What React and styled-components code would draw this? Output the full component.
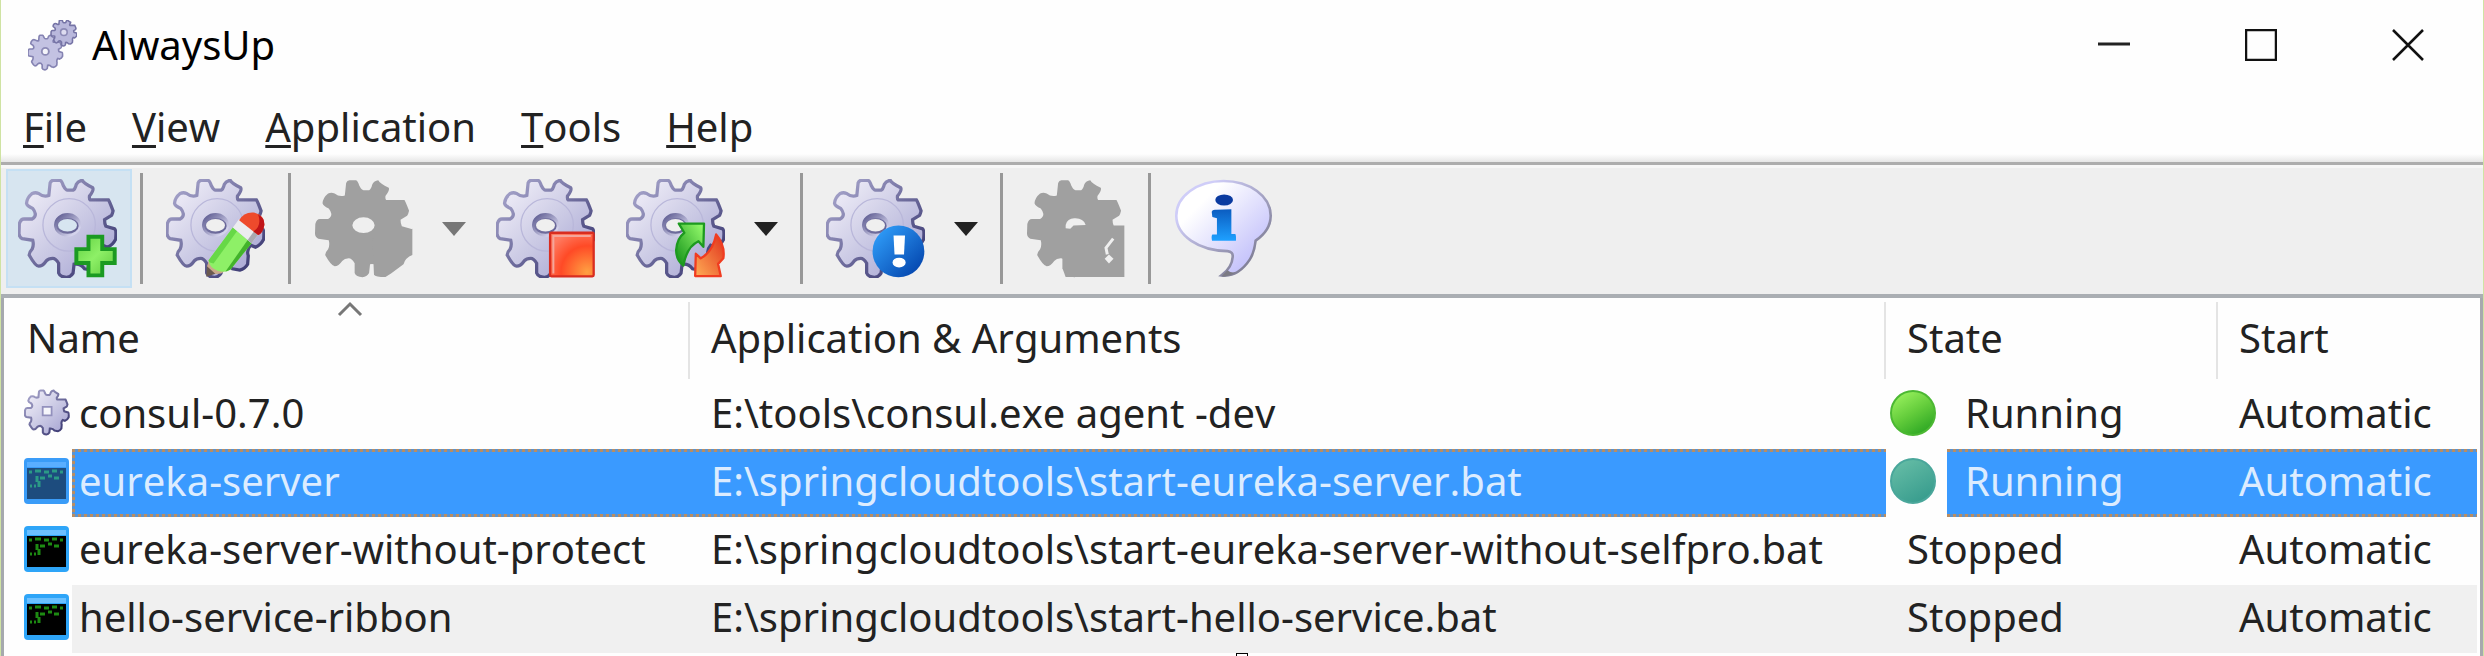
import React from "react";
import styled, { createGlobalStyle, css } from "styled-components";

const GlobalStyle = createGlobalStyle`
  * { box-sizing: border-box; }
  body {
    margin: 0;
    background: #fff;
    color: #222;
    font-family: "Noto Sans", "Open Sans", sans-serif;
    font-size: 40px;
    line-height: 56px;
    font-kerning: none;
  }
  button { font: inherit; font-kerning: none; color: inherit; background: none; border: 0; padding: 0; margin: 0; }
  svg { display: block; }
`;

const AppWindow = styled.main`
  display: flex;
  flex-direction: column;
  min-height: 100vh;
  background: #fefefe;
  border: solid #cfe3a3;
  border-width: 0 1px;
`;

const TitleBar = styled.header`
  display: flex;
  align-items: center;
  height: 90px;
  padding: 0 2px 0 27px;
  gap: 15px;
`;

const Title = styled.h1`
  flex: 1;
  margin: 0;
  font-size: 40px;
  font-weight: 400;
  color: #000;
`;

const WindowControls = styled.div`
  display: flex;
`;

const WindowButton = styled.button`
  width: 147px;
  height: 88px;
  display: flex;
  align-items: center;
  justify-content: center;
`;

const MenuBar = styled.nav`
  display: flex;
  padding: 9px 0 7px;
  background: linear-gradient(#fefefe 64px, #e6e6e6 72px);
`;

const MenuItem = styled.button`
  padding: 0 23px 0 22px;
`;

const Mnemonic = styled.span`
  text-decoration: underline;
  text-decoration-thickness: 3px;
  text-decoration-skip-ink: none;
  text-underline-offset: 3px;
`;

const Toolbar = styled.div`
  display: flex;
  align-items: center;
  padding: 4px 5px 6px;
  background: #efefef;
  border-top: 3px solid #adadad;
  border-bottom: 4px solid #aaaeb3;
  box-shadow: inset 0 3px #f7f7f7;
`;

const ToolButton = styled.button`
  display: flex;
  align-items: center;
  width: 126px;
  height: 119px;
  padding-left: 10px;
  border: 2px solid transparent;
  margin-right: ${(p) => (p.$split ? 0 : 4)}px;
  ${(p) =>
    p.$hot &&
    css`
      background: #d7e5f0;
      border-color: #c5e0f4;
    `}
`;

const DropButton = styled.button`
  width: 52px;
  height: 119px;
  margin-right: 4px;
  display: flex;
  align-items: center;
  justify-content: center;
`;

const Separator = styled.span`
  width: 3px;
  height: 111px;
  margin: 0 11px 0 4px;
  background: #989898;
`;

const ListFrame = styled.section`
  flex: 1;
  display: flex;
  flex-direction: column;
  justify-content: space-between;
  border: solid #a6a9ae;
  border-width: 0 3px;
`;

const AppTable = styled.table`
  width: 100%;
  table-layout: fixed;
  border-collapse: collapse;
`;

const HeadCell = styled.th`
  position: relative;
  width: ${(p) => p.$width || "auto"};
  height: 83px;
  padding: 12px 22px 15px;
  padding-left: ${(p) => (p.$first ? 23 : 21)}px;
  font-weight: 400;
  text-align: left;
  background: linear-gradient(#e4e4e4, #e4e4e4) right 4px / 2px 77px no-repeat;
  &:last-child { background: none; }
`;

const SortMark = styled.svg`
  position: absolute;
  top: 3px;
  left: calc(50% - 10px);
`;

const Cell = styled.td`
  padding: 0;
`;

const CellLine = styled.div`
  display: flex;
  align-items: flex-start;
  height: 68px;
  padding-left: ${(p) => p.$inset || 0}px;
  margin-right: ${(p) => (p.$last ? 3 : 0)}px;
`;

const IconSlot = styled.span`
  flex: none;
  width: ${(p) => p.$width}px;
  padding-top: 8px;
`;

const dashes = "#b98d62 0 3px, #5b93cf 3px 6px";

const Label = styled.span`
  flex: 1;
  height: 68px;
  padding-left: ${(p) => p.$pad}px;
  line-height: 64px;
  white-space: nowrap;
  ${(p) => p.$tone === "shaded" && css`background: #f0f0f0;`}
  ${(p) =>
    p.$tone === "selected" &&
    css`
      color: #dcecff;
      background:
        repeating-linear-gradient(90deg, ${dashes}) top / 100% 3px no-repeat,
        repeating-linear-gradient(90deg, ${dashes}) bottom / 100% 3px no-repeat,
        ${p.$edge ? `repeating-linear-gradient(${dashes}) left / 3px 100% no-repeat,` : ""}
        #3a9aff;
    `}
`;

const ResizeGrip = styled.span`
  align-self: center;
  width: 12px;
  height: 3px;
  border: 1px solid #000;
  border-bottom: 0;
  background: #fff;
`;

const GEAR =
  "M91 48L95 10Q98 2 105 2L125 2Q131 4 135 18Q142 32 148 32L165 32Q171 30 175 14Q180 4 193 2Q198 12 225 25Q229 32 215 50Q214 60 217 62L273 62Q276 66 287 95Q284 108 281 110L261 122Q261 134 265 142L292 150Q297 153 295 182Q286 200 270 206L255 200Q242 215 248 232L246 258Q238 272 222 276L200 272Q188 255 168 258L165 285Q158 297 145 298Q125 297 121 285L121 255Q112 240 103 240Q90 240 83 248Q72 264 60 264Q50 264 31 230Q32 220 40 212Q46 200 42 185L10 180Q1 176 0 165L1 135Q5 120 15 120L40 120Q50 115 50 105Q48 95 42 88Q24 80 23 72Q24 55 40 42Q50 38 60 42Q75 54 91 48Z";
const HOLE = "M114 139a34 24 0 1 0 68 0a34 24 0 1 0 -68 0Z";

function Defs() {
  return (
    <svg width="0" height="0" aria-hidden="true" style={{ position: "absolute" }}>
      <defs>
        <linearGradient id="gearFill" x1="0" y1="0" x2="1" y2="1">
          <stop offset="0.1" stopColor="#eeecf7" />
          <stop offset="0.5" stopColor="#cccbe5" />
          <stop offset="0.9" stopColor="#a9a7d4" />
        </linearGradient>
        <linearGradient id="gearEdge" x1="0" y1="0" x2="1" y2="1">
          <stop offset="0.1" stopColor="#a3a1c8" />
          <stop offset="0.5" stopColor="#6f6d9d" />
          <stop offset="0.85" stopColor="#424078" />
        </linearGradient>
        <linearGradient id="holeEdge" x1="0" y1="0" x2="1" y2="1">
          <stop offset="0.1" stopColor="#5f5d92" />
          <stop offset="0.8" stopColor="#d4d3ec" />
        </linearGradient>
        <linearGradient id="leaf" x1="0" y1="0" x2="1" y2="1">
          <stop offset="0" stopColor="#5fd040" />
          <stop offset="0.5" stopColor="#8ef067" />
          <stop offset="1" stopColor="#5cc83c" />
        </linearGradient>
        <linearGradient id="arrowGreen" x1="1" y1="0" x2="0" y2="1">
          <stop offset="0" stopColor="#9bff70" />
          <stop offset="0.9" stopColor="#1d9a1f" />
        </linearGradient>
        <linearGradient id="arrowRed" x1="1" y1="0" x2="0" y2="1">
          <stop offset="0" stopColor="#e0301c" />
          <stop offset="1" stopColor="#ffad55" />
        </linearGradient>
        <radialGradient id="stopFill" cx="0.85" cy="0.9" r="1">
          <stop offset="0" stopColor="#ffa042" />
          <stop offset="0.6" stopColor="#ff4a26" />
          <stop offset="1" stopColor="#ff7a60" />
        </radialGradient>
        <linearGradient id="alertFill" x1="0" y1="0" x2="1" y2="1">
          <stop offset="0.1" stopColor="#2f9cf8" />
          <stop offset="0.9" stopColor="#0446ae" />
        </linearGradient>
        <linearGradient id="bubbleFill" x1="0" y1="0" x2="1" y2="1">
          <stop offset="0.25" stopColor="#ffffff" />
          <stop offset="0.8" stopColor="#c6c4fb" />
        </linearGradient>
        <linearGradient id="bubbleEdge" x1="0" y1="0" x2="1" y2="1">
          <stop offset="0.2" stopColor="#cfcdf8" />
          <stop offset="0.8" stopColor="#83829a" />
        </linearGradient>
        <linearGradient id="infoFill" x1="0" y1="0" x2="0" y2="1">
          <stop offset="0" stopColor="#0b5cc0" />
          <stop offset="1" stopColor="#1ea0ff" />
        </linearGradient>
        <linearGradient id="runFill" x1="0.2" y1="0" x2="0.8" y2="1">
          <stop offset="0" stopColor="#9bf25f" />
          <stop offset="0.5" stopColor="#63cc3b" />
          <stop offset="1" stopColor="#27a321" />
        </linearGradient>
        <linearGradient id="runSelFill" x1="0.2" y1="0" x2="0.8" y2="1">
          <stop offset="0" stopColor="#66bda6" />
          <stop offset="1" stopColor="#359a8c" />
        </linearGradient>
      </defs>
    </svg>
  );
}

const GearShape = () => (
  <g>
    <path d={GEAR + HOLE} fill="url(#gearFill)" stroke="url(#gearEdge)" strokeWidth="10" fillRule="evenodd" />
    <circle cx="153" cy="138" r="80" fill="none" stroke="#b9b7da" strokeWidth="4" />
    <path
      d="M107 138a41 36 0 1 0 82 0a41 36 0 1 0 -82 0ZM114 141a34 24 0 1 0 68 0a34 24 0 1 0 -68 0Z"
      fill="url(#holeEdge)"
      fillRule="evenodd"
    />
  </g>
);

const ToolIcon = ({ children }) => (
  <svg width="99" height="99" viewBox="-3 -2 302 302" aria-hidden="true">
    {children}
  </svg>
);

const AddIcon = () => (
  <ToolIcon>
    <GearShape />
    <path
      d="M212 174H254V212H292V254H254V292H212V254H175V212H212Z"
      fill="url(#leaf)"
      stroke="#1b9a22"
      strokeWidth="12"
    />
  </ToolIcon>
);

const EditIcon = () => (
  <ToolIcon>
    <GearShape />
    <path d="M120 296L122 260L158 284Z" fill="#6b5a50" />
    <path d="M122 264L130 242L184 274L165 286L148 288Z" fill="#c9a98a" />
    <path d="M201 146L258 194L194 274Q180 284 156 279Q128 268 127 246Z" fill="#8ef067" />
    <path d="M201 146L214 157L142 256Q128 254 127 246Z" fill="#67d847" />
    <path d="M258 194L194 274L178 281L246 184Z" fill="#43b32b" />
    <path d="M201 146L220 120L278 168L258 194Z" fill="#ececf0" />
    <path d="M246 184L265 158L278 168L258 194Z" fill="#a9a9b2" />
    <path d="M220 124Q234 98 264 100Q298 108 297 138Q292 164 278 169Z" fill="#ee4a2c" />
    <path d="M278 106Q298 116 297 138Q292 164 278 169L264 158Q290 140 278 106Z" fill="#c01418" />
  </ToolIcon>
);

const StartDisabledIcon = () => (
  <ToolIcon>
    <path d={GEAR + HOLE} fill="#a0a0a0" fillRule="evenodd" />
    <path d="M175 180L180 290Q184 297 215 297L232 286L270 258Q276 238 297 230V150Z" fill="#a0a0a0" />
  </ToolIcon>
);

const StopIcon = () => (
  <ToolIcon>
    <GearShape />
    <rect x="162" y="162" width="133" height="133" rx="4" fill="url(#stopFill)" stroke="#d92d20" strokeWidth="7" />
    <path d="M172 286V172H286" fill="none" stroke="#f4a69b" strokeWidth="6" />
  </ToolIcon>
);

const RestartIcon = () => (
  <ToolIcon>
    <GearShape />
    <path
      d="M158 134L235 134L233 205L218 188Q182 205 172 262Q150 245 150 215Q152 180 175 162Z"
      fill="url(#arrowGreen)"
      stroke="#1d9a1f"
      strokeWidth="7"
      strokeLinejoin="round"
    />
    <path
      d="M272 167Q300 200 294 240L278 257L286 294L208 294L210 226L225 240Q262 220 272 167Z"
      fill="url(#arrowRed)"
      stroke="#f03c20"
      strokeWidth="7"
      strokeLinejoin="round"
    />
  </ToolIcon>
);

const AlertIcon = () => (
  <ToolIcon>
    <GearShape />
    <circle cx="218" cy="219" r="79" fill="url(#alertFill)" />
    <path d="M203 170H238L235 228H206Z" fill="#fff" />
    <ellipse cx="220" cy="253" rx="20" ry="15" fill="#fff" />
  </ToolIcon>
);

const HelpDisabledIcon = () => (
  <ToolIcon>
    <path d={GEAR} fill="#a0a0a0" />
    <path d="M108 140H297V297H118L108 270V250Z" fill="#a0a0a0" />
    <path d="M118 148L118 138Q124 116 148 118Q172 118 179 138L142 140L132 150Z" fill="#efefef" />
    <path d="M263 180L241 208L245 228" fill="none" stroke="#efefef" strokeWidth="9" />
    <path d="M250 228L264 241L250 256L237 241Z" fill="#efefef" />
  </ToolIcon>
);

const InfoIcon = () => (
  <ToolIcon>
    <path
      d="M148 4C68 4 4 50 4 110C4 172 74 216 160 218Q178 220 176 236Q174 268 142 292Q192 298 228 244Q242 222 246 186Q292 154 292 110C292 50 228 4 148 4Z"
      fill="url(#bubbleFill)"
      stroke="url(#bubbleEdge)"
      strokeWidth="8"
    />
    <path d="M142 295L160 276Q172 286 186 282Q166 297 142 295Z" fill="#7c7b84" />
    <ellipse cx="150" cy="62" rx="27" ry="17" fill="#0a3aa0" />
    <path d="M112 98Q114 90 126 92L172 90V166H184Q187 170 186 186H113Q110 172 114 167H128V118L114 114Z" fill="url(#infoFill)" />
  </ToolIcon>
);

const DropArrow = ({ muted }) => (
  <svg width="24" height="14" viewBox="0 0 24 14" aria-hidden="true">
    <path d="M0 0H24L12 14Z" fill={muted ? "#777" : "#222"} />
  </svg>
);

const GearsIcon = () => (
  <svg width="49" height="51" viewBox="0 0 49 51" aria-hidden="true">
    <g transform="translate(0 15) scale(0.117)">
      <path d={GEAR} fill="#c3c2e2" stroke="#8583b2" strokeWidth="14" />
      <circle cx="148" cy="140" r="30" fill="#f4f4fa" stroke="#8c8ab6" strokeWidth="16" />
    </g>
    <g transform="translate(23 0) scale(0.087)">
      <path d={GEAR} fill="#b9b8dc" stroke="#7573a5" strokeWidth="18" />
      <circle cx="148" cy="140" r="38" fill="#dddcf0" stroke="#8c8ab6" strokeWidth="18" />
    </g>
  </svg>
);

const SmallGear = () => (
  <svg width="46" height="47" viewBox="-6 -6 310 312" aria-hidden="true">
    <path d={GEAR} fill="url(#gearFill)" stroke="url(#gearEdge)" strokeWidth="14" />
    <path d="M120 112H180V170H120Z" fill="#f6f6fb" stroke="#9391bd" strokeWidth="12" />
  </svg>
);

const ConsoleIcon = ({ selected }) => {
  const ink = selected ? "#2b9a86" : "#1d8a12";
  return (
    <svg width="45" height="47" viewBox="0 0 45 47" aria-hidden="true">
      <rect width="45" height="46" rx="4" y="1" fill={selected ? "#3a9cf8" : "#2ea5f8"} />
      <path d="M3 5H42V10H3Z" fill={selected ? "#5aaeff" : "#6cc0ff"} />
      <path d="M3 11H42V42H3Z" fill={selected ? "#1d4c7e" : "#000"} />
      <path
        d="M5 15H8M11 14H17M20 15H25M28 14H33M36 15H39M13 19V25M16 21H21M24 19H28M30 21H35M15 24V30M6 29H8M10 29H12"
        stroke={ink}
        strokeWidth="3"
        fill="none"
      />
    </svg>
  );
};

const RunningDot = ({ selected }) => (
  <svg width="47" height="48" viewBox="0 0 47 48" aria-hidden="true">
    <circle
      cx="23"
      cy="24"
      r="22"
      fill={selected ? "url(#runSelFill)" : "url(#runFill)"}
      stroke={selected ? "#4aa79b" : "#4cb833"}
      strokeWidth="2"
    />
  </svg>
);

const menus = ["File", "View", "Application", "Tools", "Help"];

const apps = [
  { name: "consul-0.7.0", args: "E:\\tools\\consul.exe agent -dev", state: "Running", icon: "gear" },
  { name: "eureka-server", args: "E:\\springcloudtools\\start-eureka-server.bat", state: "Running", tone: "selected" },
  {
    name: "eureka-server-without-protect",
    args: "E:\\springcloudtools\\start-eureka-server-without-selfpro.bat",
    state: "Stopped",
  },
  { name: "hello-service-ribbon", args: "E:\\springcloudtools\\start-hello-service.bat", state: "Stopped", tone: "shaded" },
];

function AppRow({ app }) {
  const selected = app.tone === "selected";
  const running = app.state === "Running";
  return (
    <tr aria-selected={selected}>
      <Cell>
        <CellLine $inset={20}>
          <IconSlot $width={48}>{app.icon === "gear" ? <SmallGear /> : <ConsoleIcon selected={selected} />}</IconSlot>
          <Label $tone={app.tone} $pad={7} $edge>
            {app.name}
          </Label>
        </CellLine>
      </Cell>
      <Cell>
        <CellLine>
          <Label $tone={app.tone} $pad={21}>
            {app.args}
          </Label>
        </CellLine>
      </Cell>
      <Cell>
        <CellLine $inset={running ? 4 : 0}>
          {running && (
            <IconSlot $width={57}>
              <RunningDot selected={selected} />
            </IconSlot>
          )}
          <Label $tone={app.tone} $pad={running ? 18 : 21}>
            {app.state}
          </Label>
        </CellLine>
      </Cell>
      <Cell>
        <CellLine $last>
          <Label $tone={app.tone} $pad={21}>
            Automatic
          </Label>
        </CellLine>
      </Cell>
    </tr>
  );
}

export default function App() {
  return (
    <AppWindow>
      <GlobalStyle />
      <Defs />
      <TitleBar>
        <GearsIcon />
        <Title>AlwaysUp</Title>
        <WindowControls>
          <WindowButton aria-label="Minimize">
            <svg width="32" height="32" viewBox="0 0 32 32">
              <path d="M0 15H32" stroke="#222" strokeWidth="3" />
            </svg>
          </WindowButton>
          <WindowButton aria-label="Maximize">
            <svg width="32" height="32" viewBox="0 0 32 32">
              <path d="M1 1H31V31H1Z" fill="none" stroke="#111" strokeWidth="2.5" />
            </svg>
          </WindowButton>
          <WindowButton aria-label="Close">
            <svg width="32" height="32" viewBox="0 0 32 32">
              <path d="M1 1L31 31M31 1L1 31" stroke="#111" strokeWidth="2.5" />
            </svg>
          </WindowButton>
        </WindowControls>
      </TitleBar>
      <MenuBar>
        {menus.map((m) => (
          <MenuItem key={m}>
            <Mnemonic>{m[0]}</Mnemonic>
            {m.slice(1)}
          </MenuItem>
        ))}
      </MenuBar>
      <Toolbar role="toolbar">
        <ToolButton $hot aria-label="Add application"><AddIcon /></ToolButton>
        <Separator />
        <ToolButton aria-label="Edit application"><EditIcon /></ToolButton>
        <Separator />
        <ToolButton $split disabled aria-label="Start application"><StartDisabledIcon /></ToolButton>
        <DropButton disabled aria-label="Start options"><DropArrow muted /></DropButton>
        <ToolButton aria-label="Stop application"><StopIcon /></ToolButton>
        <ToolButton $split aria-label="Restart application"><RestartIcon /></ToolButton>
        <DropButton aria-label="Restart options"><DropArrow /></DropButton>
        <Separator />
        <ToolButton $split aria-label="Application events"><AlertIcon /></ToolButton>
        <DropButton aria-label="Event options"><DropArrow /></DropButton>
        <Separator />
        <ToolButton disabled aria-label="Application report"><HelpDisabledIcon /></ToolButton>
        <Separator />
        <ToolButton aria-label="About"><InfoIcon /></ToolButton>
      </Toolbar>
      <ListFrame>
        <AppTable>
          <thead>
            <tr>
              <HeadCell $first $width="686px" aria-sort="ascending">
                Name
                <SortMark width="26" height="16" viewBox="0 0 26 16" aria-hidden="true">
                  <path d="M2 14L13 3L24 14" fill="none" stroke="#777" strokeWidth="3" />
                </SortMark>
              </HeadCell>
              <HeadCell>Application &amp; Arguments</HeadCell>
              <HeadCell $width="332px">State</HeadCell>
              <HeadCell $width="262px">Start</HeadCell>
            </tr>
          </thead>
          <tbody>
            {apps.map((a) => (
              <AppRow key={a.name} app={a} />
            ))}
          </tbody>
        </AppTable>
        <ResizeGrip />
      </ListFrame>
    </AppWindow>
  );
}
